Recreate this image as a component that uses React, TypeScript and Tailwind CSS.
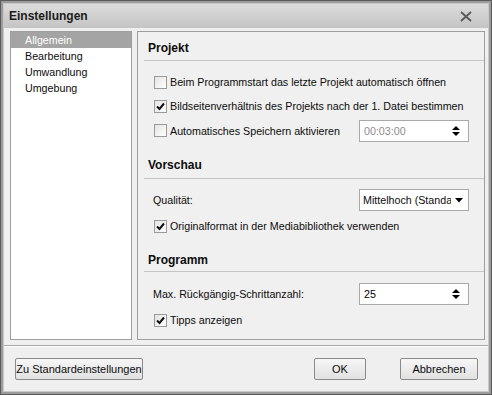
import React from "react";

const font = { fontFamily: '"Liberation Sans", Arial, sans-serif' };

function Check({ on }: { on?: boolean }) {
  return (
    <span className="w-[13px] h-[13px] border border-[#9a9a9a] bg-gradient-to-br from-[#e4e4e4] to-white flex items-center justify-center shrink-0">
      {on && (
        <svg width="9" height="9" viewBox="0 0 9 9">
          <path d="M1 4.5 L3.5 7 L8 1.5" stroke="#111" strokeWidth="2" fill="none" />
        </svg>
      )}
    </span>
  );
}

function CheckRow({ label, on, h, mt }: { label: string; on?: boolean; h: string; mt?: string }) {
  return (
    <div className={`flex items-center gap-[3px] pl-[16px] ${h} ${mt ?? ""}`}>
      <Check on={on} />
      <span>{label}</span>
    </div>
  );
}

function Spin({ value, disabled }: { value: string; disabled?: boolean }) {
  return (
    <div className="w-[110px] h-[22px] border border-[#a9a9a9] bg-white flex items-center justify-between pl-[4px] pr-[8px]">
      <span className={disabled ? "text-[#8d8d8d]" : "text-black"}>{value}</span>
      <svg width="8" height="12" viewBox="0 0 8 12">
        <path d="M0 5 L4 1 L8 5 Z M0 7 L8 7 L4 11 Z" fill="#000" />
      </svg>
    </div>
  );
}

function Section({ title, pt, lineMt, children }: { title: string; pt: string; lineMt: string; children: React.ReactNode }) {
  return (
    <div className={pt}>
      <div className="pl-[10px] text-[12px] font-bold leading-[14px]">{title}</div>
      <div className={`ml-[6px] h-px bg-[#c5c5c5] ${lineMt}`} />
      {children}
    </div>
  );
}

function Btn({ label, w }: { label: string; w: string }) {
  return (
    <button className={`${w} h-[22px] border border-[#8a8a8a] rounded-[2px] bg-gradient-to-b from-[#f6f6f6] to-[#e1e1e1] text-[11px]`}>
      {label}
    </button>
  );
}

export default function App() {
  const items = ["Allgemein", "Bearbeitung", "Umwandlung", "Umgebung"];
  return (
    <div
      className="w-[492px] h-[395px] border border-[#5a5a5a] bg-[#9c9c9c] p-[2px] text-[10.7px] text-[#0c0c0c]"
      style={font}
    >
      <div className="w-full h-full flex flex-col bg-[#efefef] border border-[#c8c8c8]">
        {/* title bar */}
        <div className="h-[24px] shrink-0 flex items-center justify-between pl-[5px] pr-[16px] bg-gradient-to-b from-[#dcdcdc] to-[#c4c4c4]">
          <span className="text-[12px] font-bold text-[#1b1b1b]">Einstellungen</span>
          <svg width="12" height="11" viewBox="0 0 12 11">
            <path d="M1 1 L11 10 M11 1 L1 10" stroke="#5a5a5a" strokeWidth="1.8" />
          </svg>
        </div>

        <div className="flex gap-[5px] h-[309px] mt-[3px] pl-[6px] pr-[3px]">
          {/* left list */}
          <div className="w-[122px] bg-white border border-[#9e9e9e] flex flex-col">
            {items.map((it, i) => (
              <div
                key={it}
                className={`h-[16px] flex items-center pl-[14px] ${i === 0 ? "bg-[#a4a4a4] text-white" : ""}`}
              >
                {it}
              </div>
            ))}
          </div>

          {/* settings panel */}
          <div className="flex-1 border border-[#9e9e9e] bg-[#f0f0f0]">
            <Section title="Projekt" pt="pt-[9px]" lineMt="mt-[5px]">
              <CheckRow label="Beim Programmstart das letzte Projekt automatisch öffnen" h="h-[24px]" mt="mt-[9px]" />
              <CheckRow label="Bildseitenverhältnis des Projekts nach der 1. Datei bestimmen" on h="h-[25px]" />
              <div className="h-[24px] flex items-center justify-between pr-[15px]">
                <div className="flex items-center gap-[3px] pl-[16px]">
                  <Check />
                  <span>Automatisches Speichern aktivieren</span>
                </div>
                <Spin value="00:03:00" disabled />
              </div>
            </Section>

            <Section title="Vorschau" pt="pt-[15px]" lineMt="mt-[6px]">
              <div className="h-[22px] mt-[10px] flex items-center justify-between pl-[15px] pr-[15px]">
                <span>Qualität:</span>
                <div className="w-[110px] h-[22px] border border-[#a9a9a9] bg-white flex items-center justify-between pl-[3px] pr-[5px]">
                  <span className="whitespace-nowrap overflow-hidden w-[88px]">Mittelhoch (Standard)</span>
                  <svg width="8" height="5" viewBox="0 0 8 5">
                    <path d="M0 0 L8 0 L4 4.5 Z" fill="#000" />
                  </svg>
                </div>
              </div>
              <CheckRow label="Originalformat in der Mediabibliothek verwenden" on h="h-[24px]" mt="mt-[3px]" />
            </Section>

            <Section title="Programm" pt="pt-[15px]" lineMt="mt-[4px]">
              <div className="h-[22px] mt-[11px] flex items-center justify-between pl-[15px] pr-[15px]">
                <span>Max. Rückgängig-Schrittanzahl:</span>
                <Spin value="25" />
              </div>
              <CheckRow label="Tipps anzeigen" on h="h-[24px]" mt="mt-[3px]" />
            </Section>
          </div>
        </div>

        {/* separator */}
        <div className="mt-[5px] h-px bg-[#a8a8a8]" />
        <div className="h-px bg-white" />

        {/* buttons */}
        <div className="flex items-center justify-between pl-[11px] pr-[10px] mt-[11px]">
          <Btn label="Zu Standardeinstellungen" w="w-[128px]" />
          <div className="flex gap-[34px]">
            <Btn label="OK" w="w-[52px]" />
            <Btn label="Abbrechen" w="w-[78px]" />
          </div>
        </div>
      </div>
    </div>
  );
}
